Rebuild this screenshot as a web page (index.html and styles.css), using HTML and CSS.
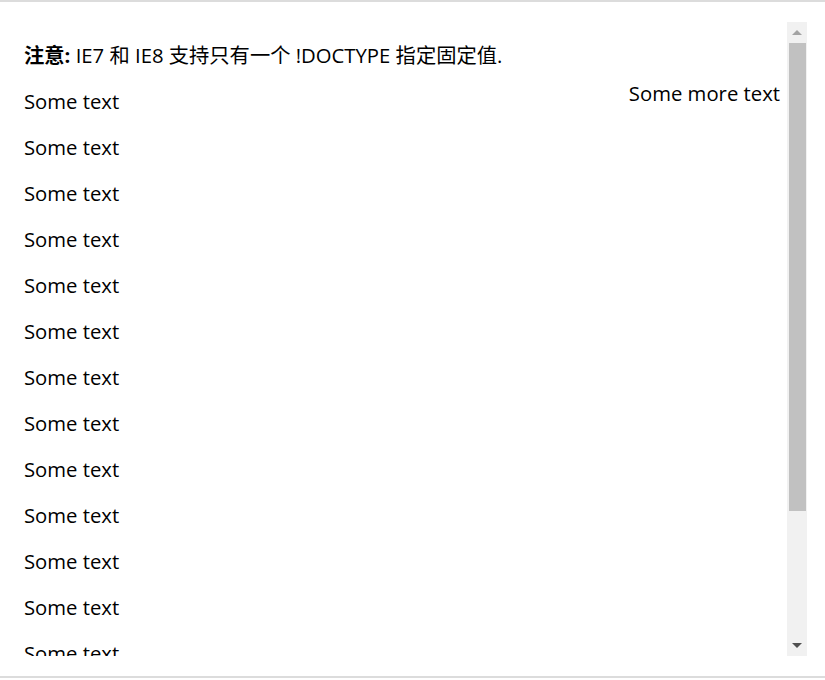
FILE: index.html
```html
<!DOCTYPE html>
<html lang="zh">
<head>
  <meta charset="UTF-8"/>
  <title>Fixed</title>
  <link rel="stylesheet" href="styles.css">
</head>
<body>
  <div class="frame">
    <div class="view">
      <div class="scroller">
        <p><b>注意:</b> IE7 和 IE8 支持只有一个 !DOCTYPE 指定固定值.</p>
        <p>Some text</p>
        <p>Some text</p>
        <p>Some text</p>
        <p>Some text</p>
        <p>Some text</p>
        <p>Some text</p>
        <p>Some text</p>
        <p>Some text</p>
        <p>Some text</p>
        <p>Some text</p>
        <p>Some text</p>
        <p>Some text</p>
        <p>Some text</p>
        <p>Some text</p>
        <p>Some text</p>
        <p>Some text</p>
      </div>
      <div class="bar">
        <div class="btn up"></div>
        <div class="track"><div class="thumb"></div></div>
        <div class="btn down"></div>
      </div>
    </div>
    <p class="fixed">Some more text</p>
  </div>
</body>
</html>
```

FILE: styles.css
```css
* {
  box-sizing: border-box;
}
html, body {
  margin: 0;
  padding: 0;
  background: #fff;
}
body {
  font-family: "Open Sans", "Noto Sans CJK SC", sans-serif;
  font-size: 20.3px;
  color: #000;
}
.frame {
  position: relative;
  height: 678px;
  border-top: 2px solid #dcdcdc;
  border-bottom: 2px solid #dcdcdc;
  padding: 20px 18px 0 0;
}
.view {
  display: flex;
  height: 634px;
}
.scroller {
  flex: 1;
  overflow: hidden;
  padding-left: 24px;
}
.scroller p {
  margin: 18px 0;
  line-height: 28px;
  white-space: nowrap;
}
.scroller p:first-child {
  margin-top: 19px;
}
.fixed {
  position: absolute;
  top: 77px;
  right: 45px;
  margin: 0;
  line-height: 28px;
}
.bar {
  width: 20px;
  background: #f1f1f1;
  display: flex;
  flex-direction: column;
}
.btn {
  height: 21px;
  display: flex;
  justify-content: center;
  align-items: center;
}
.btn.up::before,
.btn.down::before {
  content: "";
  width: 0;
  height: 0;
  border-left: 5px solid transparent;
  border-right: 5px solid transparent;
}
.btn.up::before {
  border-bottom: 5px solid #a3a3a3;
}
.btn.down::before {
  border-top: 5px solid #505050;
}
.track {
  flex: 1;
  padding: 0 1px 0 2px;
}
.thumb {
  height: 468px;
  background: #c1c1c1;
}
```
